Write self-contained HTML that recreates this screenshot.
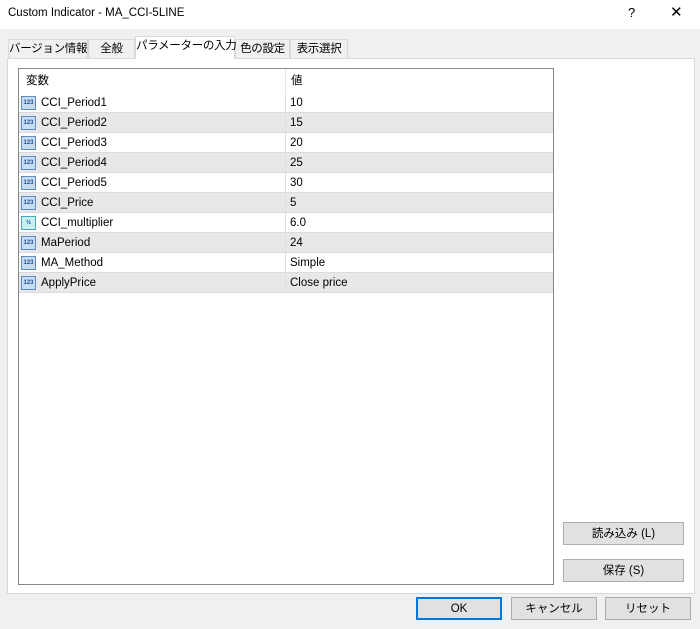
<!DOCTYPE html>
<html><head><meta charset="utf-8"><style>
*{margin:0;padding:0;box-sizing:border-box}
body{width:700px;height:629px;background:#f0f0f0;font-family:"Liberation Sans","Noto Sans CJK JP",sans-serif;font-size:11.5px;color:#000;position:relative;overflow:hidden}
.a{position:absolute}
.title{left:0;top:0;width:700px;height:29px;background:#fff}
.tab{position:absolute;top:39px;height:20px;border:1px solid #d9d9d9;border-bottom:none;background:#f0f0f0;text-align:center;line-height:19px;font-size:11.5px;white-space:nowrap;letter-spacing:-0.3px}
.panel{left:7px;top:58px;width:688px;height:536px;background:#fff;border:1px solid #d9d9d9}
.list{left:18px;top:68px;width:536px;height:517px;border:1px solid #828790;background:#fff}
.row{position:absolute;left:0;width:534px;height:20px;border-bottom:1px solid #dcdcdc;line-height:21px}
.row.g{background:#e8e8e8}
.row .n{position:absolute;left:22px}
.row .v{position:absolute;left:266px;border-left:1px solid #e0e0e0;padding-left:4px;height:19px}
.ic{position:absolute;left:2px;top:3px;width:15px;height:14px;background:#c8dcf0;border:1px solid #5b8cc8;font-size:6px;line-height:12px;color:#1d4f9a;text-align:center;font-weight:bold}
.btn{position:absolute;height:23px;background:#e1e1e1;border:1px solid #adadad;text-align:center;line-height:22px;white-space:nowrap}
</style></head><body>
<div class="a title"><span class="a" style="left:8px;top:7px">Custom Indicator - MA_CCI-5LINE</span>
<span class="a" style="left:628px;top:5px;font-size:13px">?</span>
<span class="a" style="left:670px;top:3px;font-size:15px">✕</span></div>
<div class="tab" style="left:8px;width:80px">バージョン情報</div>
<div class="tab" style="left:88px;width:47px">全般</div>
<div class="tab" style="left:290px;width:58px">表示選択</div>
<div class="tab" style="left:235px;width:55px">色の設定</div>
<div class="a panel"></div>
<div class="tab" style="left:135px;top:36px;width:100px;height:23px;background:#fff;border-color:#d9d9d9;z-index:2">パラメーターの入力</div>
<div class="a list">
<div class="row" style="top:0;height:24px;line-height:25px;border-bottom:none"><span class="a" style="left:7px">変数</span><span class="a" style="left:266px;border-left:1px solid #e5e5e5;height:24px;padding-left:5px">値</span></div>
<div class="row" style="top:24px"><span class="ic">123</span><span class="n">CCI_Period1</span><span class="v">10</span></div>
<div class="row g" style="top:44px"><span class="ic">123</span><span class="n">CCI_Period2</span><span class="v">15</span></div>
<div class="row" style="top:64px"><span class="ic">123</span><span class="n">CCI_Period3</span><span class="v">20</span></div>
<div class="row g" style="top:84px"><span class="ic">123</span><span class="n">CCI_Period4</span><span class="v">25</span></div>
<div class="row" style="top:104px"><span class="ic">123</span><span class="n">CCI_Period5</span><span class="v">30</span></div>
<div class="row g" style="top:124px"><span class="ic">123</span><span class="n">CCI_Price</span><span class="v">5</span></div>
<div class="row" style="top:144px"><span class="ic" style="background:#c8f0f0;border-color:#4aa8b8">½</span><span class="n">CCI_multiplier</span><span class="v">6.0</span></div>
<div class="row g" style="top:164px"><span class="ic">123</span><span class="n">MaPeriod</span><span class="v">24</span></div>
<div class="row" style="top:184px"><span class="ic">123</span><span class="n">MA_Method</span><span class="v">Simple</span></div>
<div class="row g" style="top:204px"><span class="ic">123</span><span class="n">ApplyPrice</span><span class="v">Close price</span></div>
</div>
<div class="btn" style="left:563px;top:522px;width:121px">読み込み (L)</div>
<div class="btn" style="left:563px;top:559px;width:121px">保存 (S)</div>
<div class="btn" style="left:416px;top:597px;width:86px;border:2px solid #0078d7;line-height:20px">OK</div>
<div class="btn" style="left:511px;top:597px;width:86px">キャンセル</div>
<div class="btn" style="left:605px;top:597px;width:86px">リセット</div>
</body></html>
